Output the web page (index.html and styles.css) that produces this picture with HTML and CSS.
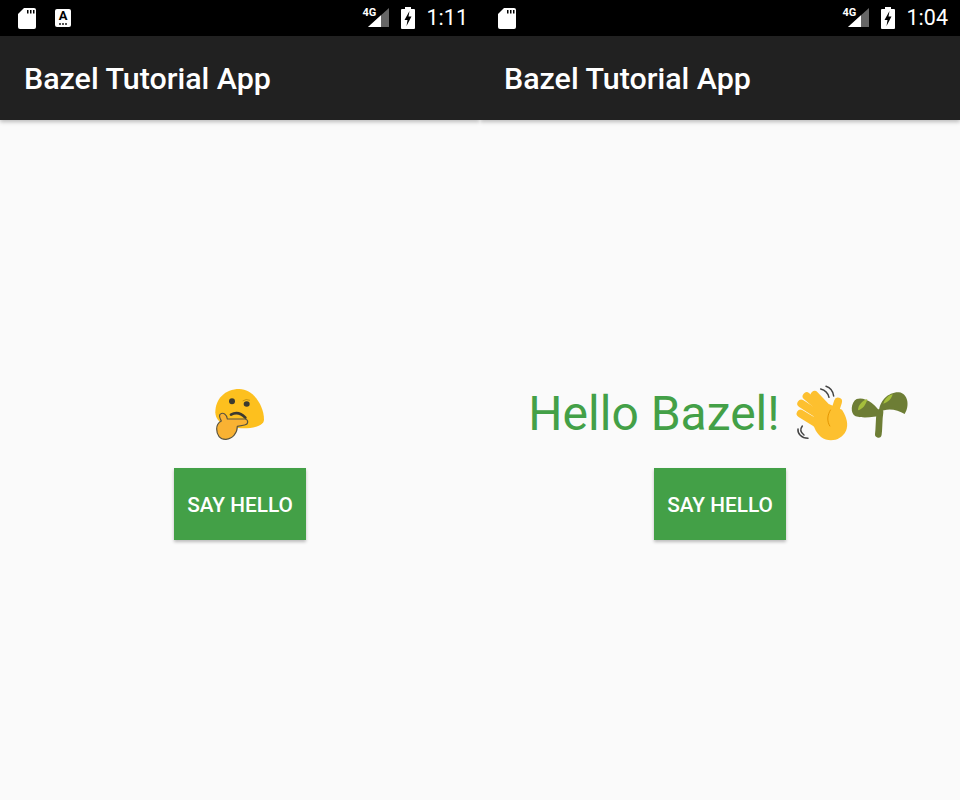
FILE: index.html
```html
<!DOCTYPE html>
<html lang="en">
<head>
    <meta charset="UTF-8">
    <meta name="viewport" content="width=device-width, initial-scale=1.0">
    <title>Bazel Tutorial App</title>
    <link rel="stylesheet" href="styles.css">
</head>
<body>

<div class="screens">
    <section class="phone">
        <div class="status">
            <svg class="sd" viewBox="0 0 18 21"><path d="M6 0h10a2 2 0 0 1 2 2v17a2 2 0 0 1-2 2H2a2 2 0 0 1-2-2V6z" fill="#fff"/><path d="M9 2h1.500v3.500H9zM12 2h1.500v3.500H12zM15 2h1.500v3.500H15z" fill="#000"/></svg>
            <span class="store"><span class="store-letter">A</span><span class="store-dots"></span></span>
            <span class="status-right">
                <span class="signal">
                    <span class="net">4G</span>
                    <svg class="bars" viewBox="0 0 21 19"><path d="M0 19 21 0v19z" fill="#666"/><path d="M0 19 13 7.240V19z" fill="#fff"/></svg>
                </span>
                <svg class="battery" viewBox="0 0 14 22"><path d="M4 0h6v2h3a1 1 0 0 1 1 1v18a1 1 0 0 1-1 1H1a1 1 0 0 1-1-1V3a1 1 0 0 1 1-1h3z" fill="#fff"/><path d="M8.500 4 3.500 13h3l-1 6 5-9.500h-3z" fill="#000"/></svg>
                <span class="time">1:11</span>
            </span>
        </div>
        <header class="toolbar">Bazel Tutorial App</header>
        <main class="content">
            <div class="message">
                <svg class="emoji" viewBox="36 15 168 168">
                    <path d="M118 30C160 30 192 80 192 122C192 138 165 148 130 148C90 148 46 135 46 100C46 60 75 30 118 30Z" fill="#fdc01e"/>
                    <circle cx="96" cy="67" r="9" fill="#3b3a30"/>
                    <ellipse cx="140" cy="75" rx="9" ry="8" fill="#3b3a30"/>
                    <path d="M128 66Q138 58 150 64" fill="none" stroke="#a07a10" stroke-width="2"/>
                    <path d="M93 107Q115 94 136 116" fill="none" stroke="#3b3a30" stroke-width="8" stroke-linecap="round"/>
                    <path d="M60 106C70 98 80 106 82 120L135 120C146 122 146 136 134 138L112 142C112 162 98 180 78 181C60 182 50 168 50 150C50 138 56 130 64 126C60 118 56 112 60 106Z" fill="#f9b233" stroke="#5a5440" stroke-width="3.500" stroke-linejoin="round"/>
                </svg>
            </div>
            <button class="hello" type="button">SAY HELLO</button>
        </main>
    </section>

    <section class="phone">
        <div class="status">
            <svg class="sd" viewBox="0 0 18 21"><path d="M6 0h10a2 2 0 0 1 2 2v17a2 2 0 0 1-2 2H2a2 2 0 0 1-2-2V6z" fill="#fff"/><path d="M9 2h1.500v3.500H9zM12 2h1.500v3.500H12zM15 2h1.500v3.500H15z" fill="#000"/></svg>
            <span class="status-right">
                <span class="signal">
                    <span class="net">4G</span>
                    <svg class="bars" viewBox="0 0 21 19"><path d="M0 19 21 0v19z" fill="#666"/><path d="M0 19 13 7.240V19z" fill="#fff"/></svg>
                </span>
                <svg class="battery" viewBox="0 0 14 22"><path d="M4 0h6v2h3a1 1 0 0 1 1 1v18a1 1 0 0 1-1 1H1a1 1 0 0 1-1-1V3a1 1 0 0 1 1-1h3z" fill="#fff"/><path d="M8.500 4 3.500 13h3l-1 6 5-9.500h-3z" fill="#000"/></svg>
                <span class="time">1:04</span>
            </span>
        </div>
        <header class="toolbar">Bazel Tutorial App</header>
        <main class="content">
            <div class="message message-wide">
                <span class="greeting">Hello Bazel!</span>
                <svg class="emoji" viewBox="24 15 168 168">
                    <g fill="none" stroke="#fdc02f" stroke-width="24" stroke-linecap="round">
                        <path d="M95 135 44 104"/>
                        <path d="M105 112 46 74"/>
                        <path d="M118 100 62 52"/>
                        <path d="M128 92 86 48"/>
                        <path d="M142 112 156 68"/>
                    </g>
                    <path d="M76 118 130 76 168 92C182 115 188 135 180 155C167 184 130 192 105 174C88 160 82 140 76 118Z" fill="#fdc02f"/>
                    <path d="M134 92C124 108 122 126 132 142" fill="none" stroke="#e59600" stroke-width="3"/>
                    <g fill="none" stroke="#444" stroke-width="4.500" stroke-linecap="round">
                        <path d="M104 30C116 33 126 42 129 55"/>
                        <path d="M120 22C132 26 141 37 143 51"/>
                        <path d="M49 141C42 150 44 160 54 168"/>
                        <path d="M36 150C34 163 46 177 66 178"/>
                    </g>
                </svg>
                <svg class="emoji" viewBox="198 15 168 168">
                    <path d="M283 166C286 145 284 125 288 100" fill="none" stroke="#6d7d35" stroke-width="20" stroke-linecap="round"/>
                    <path d="M295 110C275 72 240 52 218 60C200 70 198 105 215 112C245 120 270 112 295 110Z" fill="#6d7d35"/>
                    <path d="M285 100C285 65 315 38 345 40C372 44 378 80 362 105C340 92 310 85 285 100Z" fill="#6d7d35"/>
                    <path d="M222 94C222 78 234 66 250 60C246 78 236 90 222 94Z" fill="#a5bf3c"/>
                    <path d="M298 74C302 60 312 50 326 46C322 60 312 70 298 74Z" fill="#a5bf3c"/>
                </svg>
            </div>
            <button class="hello" type="button">SAY HELLO</button>
        </main>
    </section>
</div>

</body>
</html>
```

FILE: styles.css
```css
html, body {
    margin: 0;
    padding: 0;
    background-color: #fafafa;
}
body {
    font-family: 'Roboto', 'Liberation Sans', sans-serif;
    height: 800px;
    overflow: hidden;
}
.screens {
    display: grid;
    grid-template-columns: 480px 480px;
    height: 800px;
}
.phone {
    display: flex;
    flex-direction: column;
    height: 800px;
    overflow: hidden;
}
.status {
    display: flex;
    align-items: center;
    height: 36px;
    padding: 0 12px 0 18px;
    background-color: #000;
    color: #fff;
    box-sizing: border-box;
}
.sd {
    width: 18px;
    height: 21px;
}
.store {
    display: flex;
    flex-direction: column;
    align-items: center;
    width: 16px;
    height: 18px;
    margin-left: 19px;
    background-color: #fff;
    border-radius: 2px;
    color: #000;
}
.store-letter {
    font-size: 13px;
    font-weight: 700;
    line-height: 13px;
}
.store-dots {
    width: 8px;
    height: 2px;
    margin-top: 1px;
    background: repeating-linear-gradient(90deg, #555 0 2px, transparent 2px 3px);
}
.status-right {
    display: flex;
    align-items: center;
    margin-left: auto;
}
.signal {
    position: relative;
    width: 26px;
    height: 36px;
}
.net {
    position: absolute;
    left: 0;
    top: 6px;
    font-size: 11px;
    font-weight: 700;
    line-height: 13px;
}
.bars {
    position: absolute;
    left: 5px;
    top: 8px;
    width: 21px;
    height: 19px;
}
.battery {
    width: 14px;
    height: 22px;
    margin-left: 12px;
}
.time {
    margin-left: 12px;
    font-size: 21.5px;
    line-height: 36px;
}
.toolbar {
    height: 84px;
    padding-left: 24px;
    background-color: #212121;
    color: #fff;
    font-size: 30.4px;
    font-weight: 500;
    line-height: 86px;
    box-shadow: 0 2px 4px rgba(0, 0, 0, 0.25);
    position: relative;
}
.content {
    flex: 1;
    display: flex;
    flex-direction: column;
    align-items: center;
    padding-top: 264px;
}
.message {
    display: flex;
    align-items: center;
    height: 56px;
    margin-bottom: 28px;
}
.message-wide {
    padding-right: 6px;
}
.emoji {
    width: 56px;
    height: 56px;
    overflow: visible;
}
.greeting {
    margin-right: 14px;
    padding-top: 3px;
    color: #43a047;
    font-size: 48px;
    line-height: 60px;
}
.hello {
    width: 132px;
    height: 72px;
    padding: 2px 0 0;
    border: none;
    background-color: #43a047;
    color: #fff;
    font-family: inherit;
    font-size: 20.8px;
    font-weight: 500;
    box-shadow: 0 2px 3px rgba(0, 0, 0, 0.25);
}
```
